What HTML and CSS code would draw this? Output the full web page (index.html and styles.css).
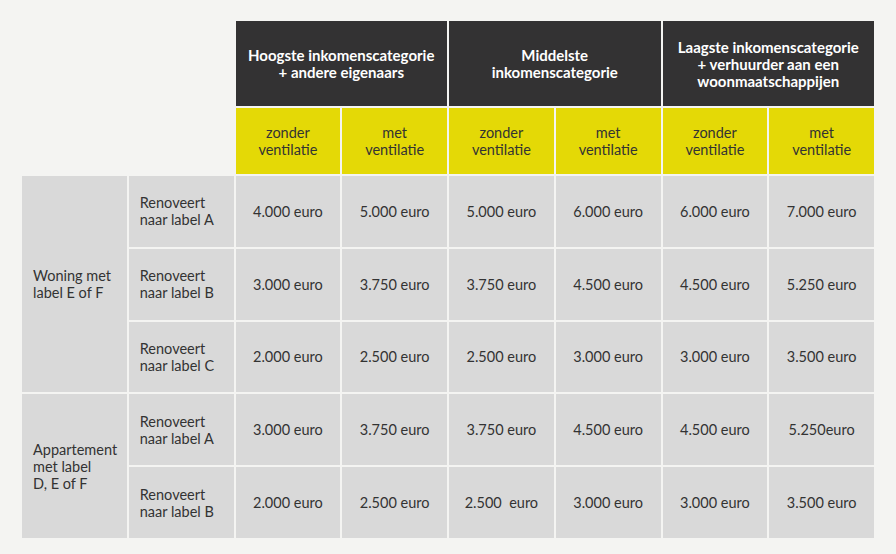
FILE: index.html
```html
<!DOCTYPE html>
<html lang="nl">
<head>
<meta charset="utf-8">
<title>Renovatiepremie</title>
<link rel="stylesheet" href="styles.css">
</head>
<body>
<table class="premie">
  <colgroup>
    <col><col><col><col><col><col><col><col>
  </colgroup>
  <thead>
    <tr class="row-group">
      <td class="blank" colspan="2" rowspan="2"></td>
      <th class="group" colspan="2">Hoogste inkomenscategorie<br>+ andere eigenaars</th>
      <th class="group" colspan="2">Middelste<br>inkomenscategorie</th>
      <th class="group" colspan="2">Laagste inkomenscategorie<br>+ verhuurder aan een<br>woonmaatschappijen</th>
    </tr>
    <tr class="row-sub">
      <th class="sub">zonder<br>ventilatie</th>
      <th class="sub">met<br>ventilatie</th>
      <th class="sub">zonder<br>ventilatie</th>
      <th class="sub">met<br>ventilatie</th>
      <th class="sub">zonder<br>ventilatie</th>
      <th class="sub">met<br>ventilatie</th>
    </tr>
  </thead>
  <tbody>
    <tr class="row-body">
      <th class="label" rowspan="3">Woning met<br>label E of F</th>
      <th class="label">Renoveert<br>naar label A</th>
      <td>4.000 euro</td><td>5.000 euro</td><td>5.000 euro</td><td>6.000 euro</td><td>6.000 euro</td><td>7.000 euro</td>
    </tr>
    <tr class="row-body">
      <th class="label">Renoveert<br>naar label B</th>
      <td>3.000 euro</td><td>3.750 euro</td><td>3.750 euro</td><td>4.500 euro</td><td>4.500 euro</td><td>5.250 euro</td>
    </tr>
    <tr class="row-body">
      <th class="label">Renoveert<br>naar label C</th>
      <td>2.000 euro</td><td>2.500 euro</td><td>2.500 euro</td><td>3.000 euro</td><td>3.000 euro</td><td>3.500 euro</td>
    </tr>
    <tr class="row-body">
      <th class="label" rowspan="2">Appartement<br>met label<br>D, E of F</th>
      <th class="label">Renoveert<br>naar label A</th>
      <td>3.000 euro</td><td>3.750 euro</td><td>3.750 euro</td><td>4.500 euro</td><td>4.500 euro</td><td>5.250euro</td>
    </tr>
    <tr class="row-body">
      <th class="label">Renoveert<br>naar label B</th>
      <td>2.000 euro</td><td>2.500 euro</td><td>2.500&nbsp; euro</td><td>3.000 euro</td><td>3.000 euro</td><td>3.500 euro</td>
    </tr>
  </tbody>
</table>
</body>
</html>
```

FILE: styles.css
```css
html, body {
  margin: 0;
  padding: 0;
  background: #f4f4f2;
}

body {
  padding: 19px 0 0 20px;
  font-family: Lato, "Open Sans", "Liberation Sans", sans-serif;
  font-size: 14.5px;
  line-height: 17px;
  color: #333333;
}

.premie {
  width: 856px;
  table-layout: fixed;
  border-collapse: separate;
  border-spacing: 2px;
}

.premie th,
.premie td {
  padding: 0;
  vertical-align: middle;
  text-align: center;
  font-weight: normal;
}

.premie .blank {
  background: transparent;
}

.row-group {
  height: 85px;
}

.premie .group {
  background: #333233;
  color: #ffffff;
  font-weight: 700;
  font-size: 15px;
  padding-top: 1px;
}

.row-sub {
  height: 66px;
}

.premie .sub {
  background: #e4d906;
  color: #333333;
}

.row-body {
  height: 70.8px;
}

.premie tbody td,
.premie tbody th {
  background: #d9d9d9;
  color: #333333;
}

.premie .label {
  text-align: left;
  padding-left: 11px;
}
```
